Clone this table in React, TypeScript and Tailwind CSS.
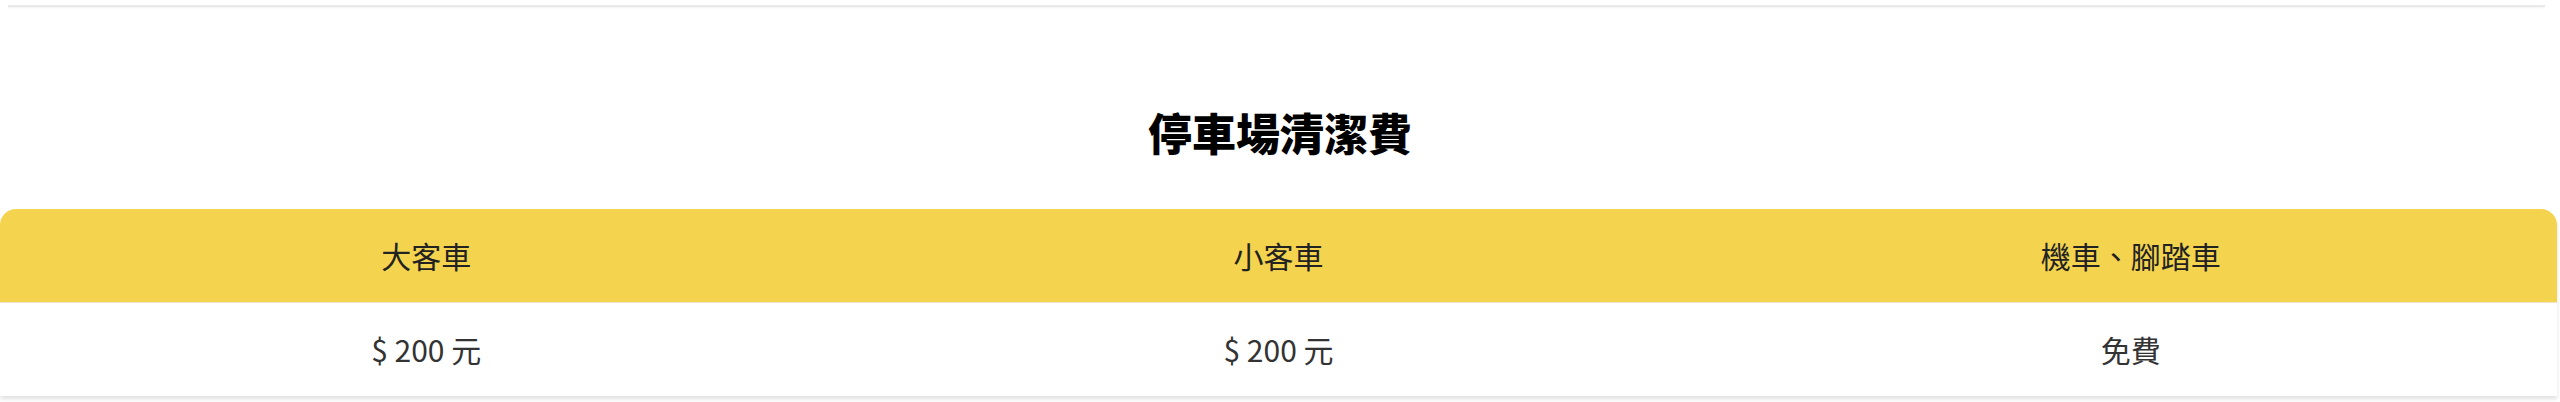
const fees = [
  { type: '大客車', price: '$ 200 元' },
  { type: '小客車', price: '$ 200 元' },
  { type: '機車、腳踏車', price: '免費' },
];

export default function App() {
  return (
    <div className="w-[2560px] h-[402px] bg-white overflow-hidden font-['Noto_Sans_CJK_TC','Noto_Sans',sans-serif]">
      {/* bottom edge of the previous card */}
      <div className="pt-[5px] pl-[8px] pr-[15px]">
        <div className="h-[2px] bg-[#e9e9e9] shadow-[0_1px_2px_rgba(0,0,0,0.06)]"></div>
      </div>

      <h2 className="mt-[95px] text-center text-[44px] leading-[60px] font-black text-black">
        停車場清潔費
      </h2>

      <div className="mt-[47px] w-[2557px] rounded-t-[16px] overflow-hidden shadow-[0_3px_4px_rgba(0,0,0,0.12)]">
        <div className="grid grid-cols-3 h-[94px] bg-[#f4d44e] border-b border-[#efe4c6]">
          {fees.map((fee) => (
            <div key={fee.type} className="flex items-center justify-center text-[30px] text-[#222]">
              {fee.type}
            </div>
          ))}
        </div>
        <div className="grid grid-cols-3 h-[93px] bg-white">
          {fees.map((fee) => (
            <div key={fee.type} className="flex items-center justify-center text-[30px] text-[#333]">
              {fee.price}
            </div>
          ))}
        </div>
      </div>
    </div>
  );
}
